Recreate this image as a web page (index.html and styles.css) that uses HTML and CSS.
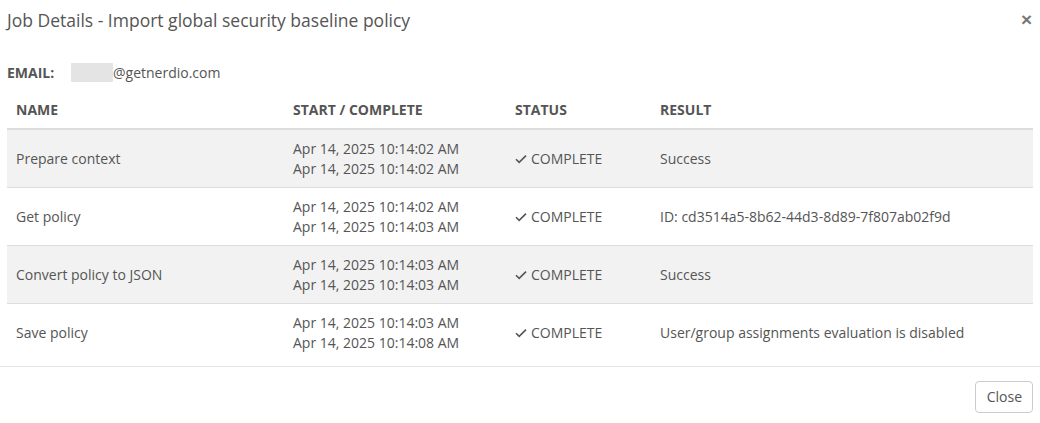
FILE: index.html
```html
<!DOCTYPE html>
<html lang="en">
<head>
  <meta charset="UTF-8">
  <title>Job Details</title>
  <link rel="stylesheet" href="styles.css">
</head>
<body>
  <div class="modal">
    <div class="modal-header">
      <h4 class="modal-title">Job Details - Import global security baseline policy</h4>
      <button class="close-x" aria-label="Close">×</button>
    </div>

    <div class="modal-body">
      <div class="email">
        <span class="email-label">EMAIL:</span>
        <span class="email-mask"></span><span class="email-domain">@getnerdio.com</span>
      </div>

      <table class="job-table">
        <thead>
          <tr>
            <th class="col-name">Name</th>
            <th class="col-time">Start / Complete</th>
            <th class="col-status">Status</th>
            <th>Result</th>
          </tr>
        </thead>
        <tbody>
          <tr>
            <td>Prepare context</td>
            <td>Apr 14, 2025 10:14:02 AM<br>Apr 14, 2025 10:14:02 AM</td>
            <td><svg class="check" viewBox="0 0 12 10"><polyline points="1,5.2 4.2,8.4 11,1.6"/></svg>COMPLETE</td>
            <td>Success</td>
          </tr>
          <tr>
            <td>Get policy</td>
            <td>Apr 14, 2025 10:14:02 AM<br>Apr 14, 2025 10:14:03 AM</td>
            <td><svg class="check" viewBox="0 0 12 10"><polyline points="1,5.2 4.2,8.4 11,1.6"/></svg>COMPLETE</td>
            <td>ID: cd3514a5-8b62-44d3-8d89-7f807ab02f9d</td>
          </tr>
          <tr>
            <td>Convert policy to JSON</td>
            <td>Apr 14, 2025 10:14:03 AM<br>Apr 14, 2025 10:14:03 AM</td>
            <td><svg class="check" viewBox="0 0 12 10"><polyline points="1,5.2 4.2,8.4 11,1.6"/></svg>COMPLETE</td>
            <td>Success</td>
          </tr>
          <tr>
            <td>Save policy</td>
            <td>Apr 14, 2025 10:14:03 AM<br>Apr 14, 2025 10:14:08 AM</td>
            <td><svg class="check" viewBox="0 0 12 10"><polyline points="1,5.2 4.2,8.4 11,1.6"/></svg>COMPLETE</td>
            <td>User/group assignments evaluation is disabled</td>
          </tr>
        </tbody>
      </table>
    </div>

    <div class="modal-footer">
      <button class="btn">Close</button>
    </div>
  </div>
</body>
</html>
```

FILE: styles.css
```css
body {
  margin: 0;
  font-family: "Open Sans", Arial, sans-serif;
  font-size: 14px;
  color: #555;
  background: #fff;
}

.modal {
  width: 1040px;
}

.modal-header {
  display: flex;
  justify-content: space-between;
  align-items: flex-start;
  padding: 8px 8px 0 7px;
  height: 44px;
}

.modal-title {
  margin: 0;
  font-size: 17.5px;
  font-weight: normal;
  line-height: 24px;
  color: #555;
}

.close-x {
  border: none;
  background: none;
  padding: 0;
  margin: 3px 0 0 0;
  font-family: Arial, sans-serif;
  font-size: 19px;
  font-weight: bold;
  line-height: 17px;
  color: #777;
  cursor: pointer;
}

.modal-body {
  padding: 10px 7px 0 7px;
}

.email {
  display: flex;
  align-items: center;
  height: 20px;
  margin-bottom: 9px;
}

.email-label {
  font-weight: bold;
  width: 64px;
}

.email-mask {
  display: inline-block;
  width: 42px;
  height: 19px;
  background: #e4e4e4;
}

.job-table {
  width: 100%;
  border-collapse: collapse;
  table-layout: fixed;
}

.job-table th {
  text-align: left;
  text-transform: uppercase;
  font-weight: bold;
  padding: 9px 9px 8px 9px;
  line-height: 20px;
  border-bottom: 2px solid #ddd;
}

.job-table td {
  padding: 9px 9px 8px 9px;
  line-height: 20px;
  border-top: 1px solid #ddd;
  vertical-align: middle;
  white-space: nowrap;
}

.job-table tbody tr:first-child td {
  border-top: none;
}

.job-table tbody tr:nth-child(odd) {
  background: #f2f2f2;
}

.col-name { width: 259px; }
.col-time { width: 204px; }
.col-status { width: 127px; }

.check {
  width: 12px;
  height: 10px;
  margin: 0 4px 0 0;
  vertical-align: 0;
  fill: none;
  stroke: #555;
  stroke-width: 1.6;
}

.modal-footer {
  border-top: 1px solid #e5e5e5;
  margin-top: 5px;
  padding: 14px 7px 0 7px;
  display: flex;
  justify-content: flex-end;
}

.btn {
  font-family: "Open Sans", Arial, sans-serif;
  font-size: 14px;
  color: #555;
  background: #fff;
  border: 1px solid #ccc;
  border-radius: 4px;
  padding: 5px 10px 5px 11px;
  line-height: 20px;
  cursor: pointer;
}
```
